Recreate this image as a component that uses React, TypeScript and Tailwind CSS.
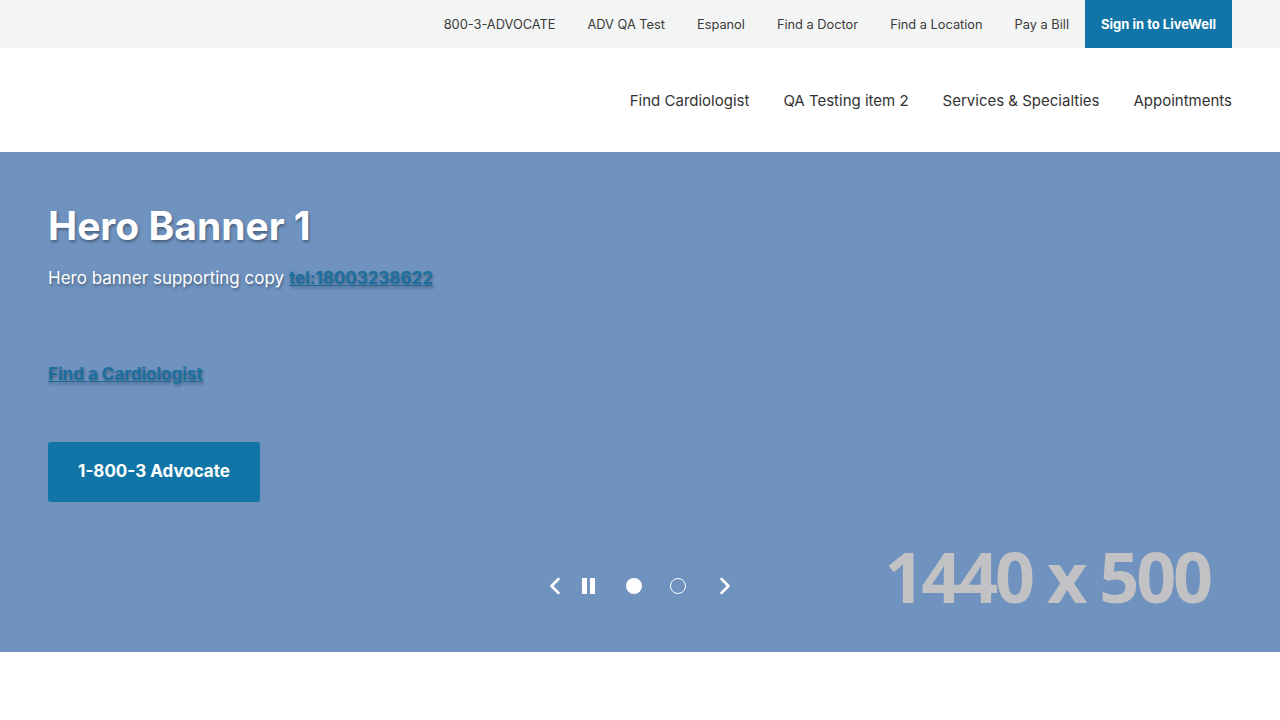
import { ChevronLeft, ChevronRight } from "lucide-react";

const utilityLinks = ["800-3-ADVOCATE", "ADV QA Test", "Espanol", "Find a Doctor", "Find a Location", "Pay a Bill"];
const mainLinks = ["Find Cardiologist", "QA Testing item 2", "Services & Specialties", "Appointments"];

function UtilityBar() {
  return (
    <div className="h-12 bg-[#f3f5f4]">
      <div className="flex h-full items-stretch justify-end px-12">
        {utilityLinks.map((l) => (
          <a key={l} href="#" className="flex items-center px-4 pt-px text-[12.8px] text-[#3a3a3a]">
            {l}
          </a>
        ))}
        <a href="#" className="flex items-center bg-[#1275a7] px-4 pt-px text-[13px] font-bold text-white">
          Sign in to LiveWell
        </a>
      </div>
    </div>
  );
}

function MainNav() {
  return (
    <div className="flex h-[104px] items-center justify-end gap-[34px] bg-white px-12 pt-0.5">
      {mainLinks.map((l) => (
        <a key={l} href="#" className="text-[15px] text-[#333]">
          {l}
        </a>
      ))}
    </div>
  );
}

function Hero() {
  const shadow = "[text-shadow:1px_2px_3px_rgba(0,0,0,0.35)]";
  return (
    <section className="relative h-[500px] overflow-hidden bg-[#6f92bf]">
      <div
        className="pointer-events-none absolute right-[70px] top-[389px] text-[70px] font-bold leading-none tracking-[-0.045em] text-[#c2c2c4]"
        style={{ fontFamily: '"Open Sans", sans-serif' }}
      >
        1440 x 500
      </div>
      <div className="relative flex flex-col items-start px-12 pt-[51px]">
        <h1 className={`text-[39px] font-bold leading-[46px] text-white ${shadow}`}>Hero Banner 1</h1>
        <p className={`mt-[17px] text-[17px] leading-6 text-white ${shadow}`}>
          Hero banner supporting copy{" "}
          <a href="#" className="font-bold text-[#1a6f9f] underline">
            tel:18003238622
          </a>
        </p>
        <a href="#" className={`mt-[72px] text-[17px] font-bold leading-6 text-[#1a6f9f] underline ${shadow}`}>
          Find a Cardiologist
        </a>
        <a
          href="#"
          className="mt-[56px] flex h-[60px] w-[212px] items-center justify-center rounded-[3px] bg-[#1275a7] text-[17px] font-bold text-white"
        >
          1-800-3 Advocate
        </a>
      </div>
      <div className="absolute bottom-[52px] left-1/2 flex -translate-x-1/2 items-center text-white">
        <button type="button" aria-label="Previous" className="flex h-7 w-7 items-center justify-center">
          <ChevronLeft size={30} strokeWidth={2.2} />
        </button>
        <button type="button" aria-label="Pause" className="ml-[5px] flex h-7 w-7 items-center justify-center gap-[3px]">
          <span className="h-4 w-[5px] bg-white" />
          <span className="h-4 w-[5px] bg-white" />
        </button>
        <span className="ml-[24px] h-4 w-4 rounded-full bg-white" />
        <span className="ml-[28px] h-4 w-4 rounded-full border border-white" />
        <button type="button" aria-label="Next" className="ml-[25px] flex h-7 w-7 items-center justify-center">
          <ChevronRight size={30} strokeWidth={2.2} />
        </button>
      </div>
    </section>
  );
}

export default function App() {
  return (
    <div className="min-h-[720px] bg-white" style={{ fontFamily: 'Inter, "Open Sans", sans-serif' }}>
      <UtilityBar />
      <MainNav />
      <Hero />
    </div>
  );
}
